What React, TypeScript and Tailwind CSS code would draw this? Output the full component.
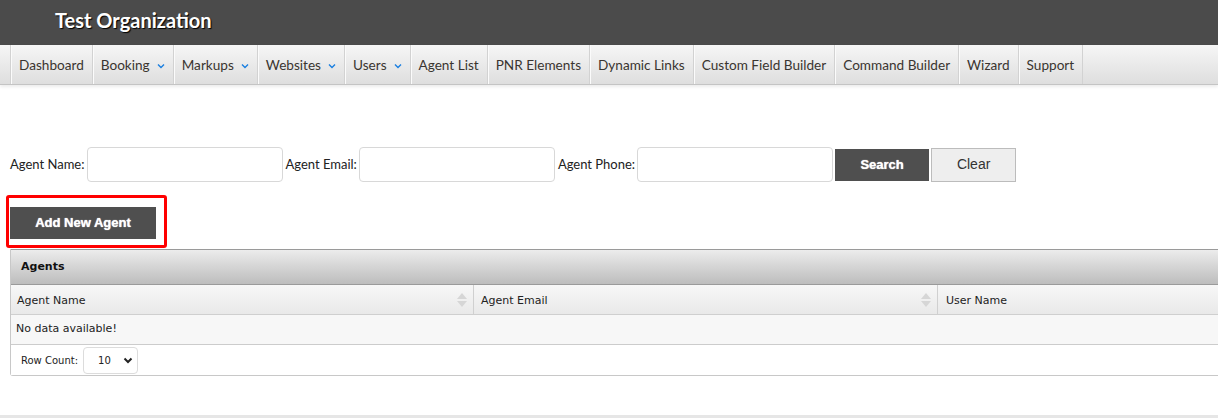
import React from "react";

const navItems: { label: string; caret?: boolean }[] = [
  { label: "Dashboard" },
  { label: "Booking", caret: true },
  { label: "Markups", caret: true },
  { label: "Websites", caret: true },
  { label: "Users", caret: true },
  { label: "Agent List" },
  { label: "PNR Elements" },
  { label: "Dynamic Links" },
  { label: "Custom Field Builder" },
  { label: "Command Builder" },
  { label: "Wizard" },
  { label: "Support" },
];

function Caret() {
  return (
    <svg width="8" height="6" viewBox="0 0 8 6" className="ml-[7px] mt-[2px]">
      <path d="M1 1.5 L4 4.5 L7 1.5" fill="none" stroke="#1a7fe0" strokeWidth="1.4" />
    </svg>
  );
}

function SortIcon() {
  return (
    <svg width="12" height="16" viewBox="0 0 12 16">
      <path d="M6 1 L11 7 L1 7 Z" fill="#d6d6d6" />
      <path d="M6 15 L11 9 L1 9 Z" fill="#d6d6d6" />
    </svg>
  );
}

export default function App() {
  const lato = { fontFamily: "Lato, 'Open Sans', sans-serif" };
  const arial = { fontFamily: "'Liberation Sans', Arial, sans-serif" };
  return (
    <div className="w-[1218px] h-[418px] overflow-hidden bg-white relative" style={lato}>
      {/* Header */}
      <div className="h-[45px] bg-[#4b4b4b] flex items-center pl-[55px] pb-[5px]">
        <span className="text-white font-bold text-[20px] [text-shadow:1px_1px_1px_#000]">
          Test Organization
        </span>
      </div>
      {/* Nav */}
      <div className="h-[40px] flex bg-gradient-to-b from-[#f6f6f6] to-[#dedede] border-b border-[#c4c4c4] shadow-[0_2px_3px_rgba(0,0,0,0.08)] pl-[10px]">
        {navItems.map((n) => (
          <div
            key={n.label}
            className="flex items-center px-[8px] pt-[1px] border-l border-[#d2d2d2] shadow-[inset_1px_0_0_#fbfbfb] text-[13.6px] text-[#3a3530] whitespace-nowrap"
          >
            {n.label}
            {n.caret && <Caret />}
          </div>
        ))}
        <div className="border-l border-[#d2d2d2]" />
      </div>

      {/* Search row */}
      <div className="flex items-center mt-[62px] pl-[10px] text-[13px] text-[#222]">
        <span>Agent Name:</span>
        <input className="ml-[3px] w-[196px] h-[35px] border border-[#d8d8d8] rounded-[4px] bg-white" />
        <span className="ml-[2px]">Agent Email:</span>
        <input className="ml-[2px] w-[196px] h-[35px] border border-[#d8d8d8] rounded-[4px] bg-white" />
        <span className="ml-[3px]">Agent Phone:</span>
        <input className="ml-[2px] w-[196px] h-[35px] border border-[#d8d8d8] rounded-[4px] bg-white" />
        <button
          className="ml-[2px] w-[94px] h-[32px] bg-[#4f4f4f] text-white font-bold text-[13px] [text-shadow:0_0_1px_#fff]"
          style={arial}
        >
          Search
        </button>
        <button
          className="ml-[2px] w-[85px] h-[34px] bg-[#eeeeee] border border-[#bcbcbc] text-[#333] text-[14px]"
          style={arial}
        >
          Clear
        </button>
      </div>

      {/* Add New Agent */}
      <div className="relative mt-[25px] ml-[10px] w-[146px] h-[32px]">
        <button
          className="w-[146px] h-[32px] bg-[#4f4f4f] text-white font-bold text-[13px] [text-shadow:0_0_1px_#fff]"
          style={arial}
        >
          Add New Agent
        </button>
        <div className="absolute left-[-4px] top-[-12px] w-[161px] h-[53px] border-[3px] border-[#ff0000] rounded-[3px] pointer-events-none" />
      </div>

      {/* Table panel */}
      <div
        className="mt-[10px] ml-[10px] w-[1400px] border-x border-b border-[#c8c8c8] rounded-b-[3px] text-[11px] text-[#222]"
        style={{ fontFamily: "Tahoma, 'DejaVu Sans', Verdana, sans-serif" }}
      >
        <div className="h-[36px] flex items-center pl-[10px] font-bold text-[#111] bg-gradient-to-b from-[#ececec] to-[#bdbdbd] border-t border-b border-[#9a9a9a]">
          Agents
        </div>
        <div className="flex h-[30px] bg-gradient-to-b from-[#f7f7f7] to-[#e9e9e9] border-b border-[#cfcfcf]">
          <div className="w-[463px] flex items-center justify-between pl-[6px] pr-[5px] border-r border-[#d0d0d0]">
            <span className="pt-[3px]">Agent Name</span>
            <SortIcon />
          </div>
          <div className="w-[464px] flex items-center justify-between pl-[7px] pr-[5px] border-r border-[#d0d0d0]">
            <span className="pt-[3px]">Agent Email</span>
            <SortIcon />
          </div>
          <div className="flex-1 flex items-center pl-[8px]">
            <span className="pt-[3px]">User Name</span>
          </div>
        </div>
        <div className="h-[30px] flex items-center pl-[5px] bg-[#f7f7f7] border-b border-[#cccccc]">
          No data available!
        </div>
        <div className="h-[30px] flex items-center pl-[10px] bg-white text-[10px]">
          <span>Row Count:</span>
          <div className="ml-[5px] w-[55px] h-[27px] border border-[#dcdcdc] rounded-[4px] flex items-center justify-between pl-[14px] pr-[4px]">
            <span>10</span>
            <svg width="10" height="7" viewBox="0 0 10 7">
              <path d="M1.5 1.5 L5 5 L8.5 1.5" fill="none" stroke="#222" strokeWidth="2" />
            </svg>
          </div>
        </div>
      </div>

      <div className="absolute left-0 right-0 top-[415px] h-[3px] bg-[#e6e6e6]" />
    </div>
  );
}
